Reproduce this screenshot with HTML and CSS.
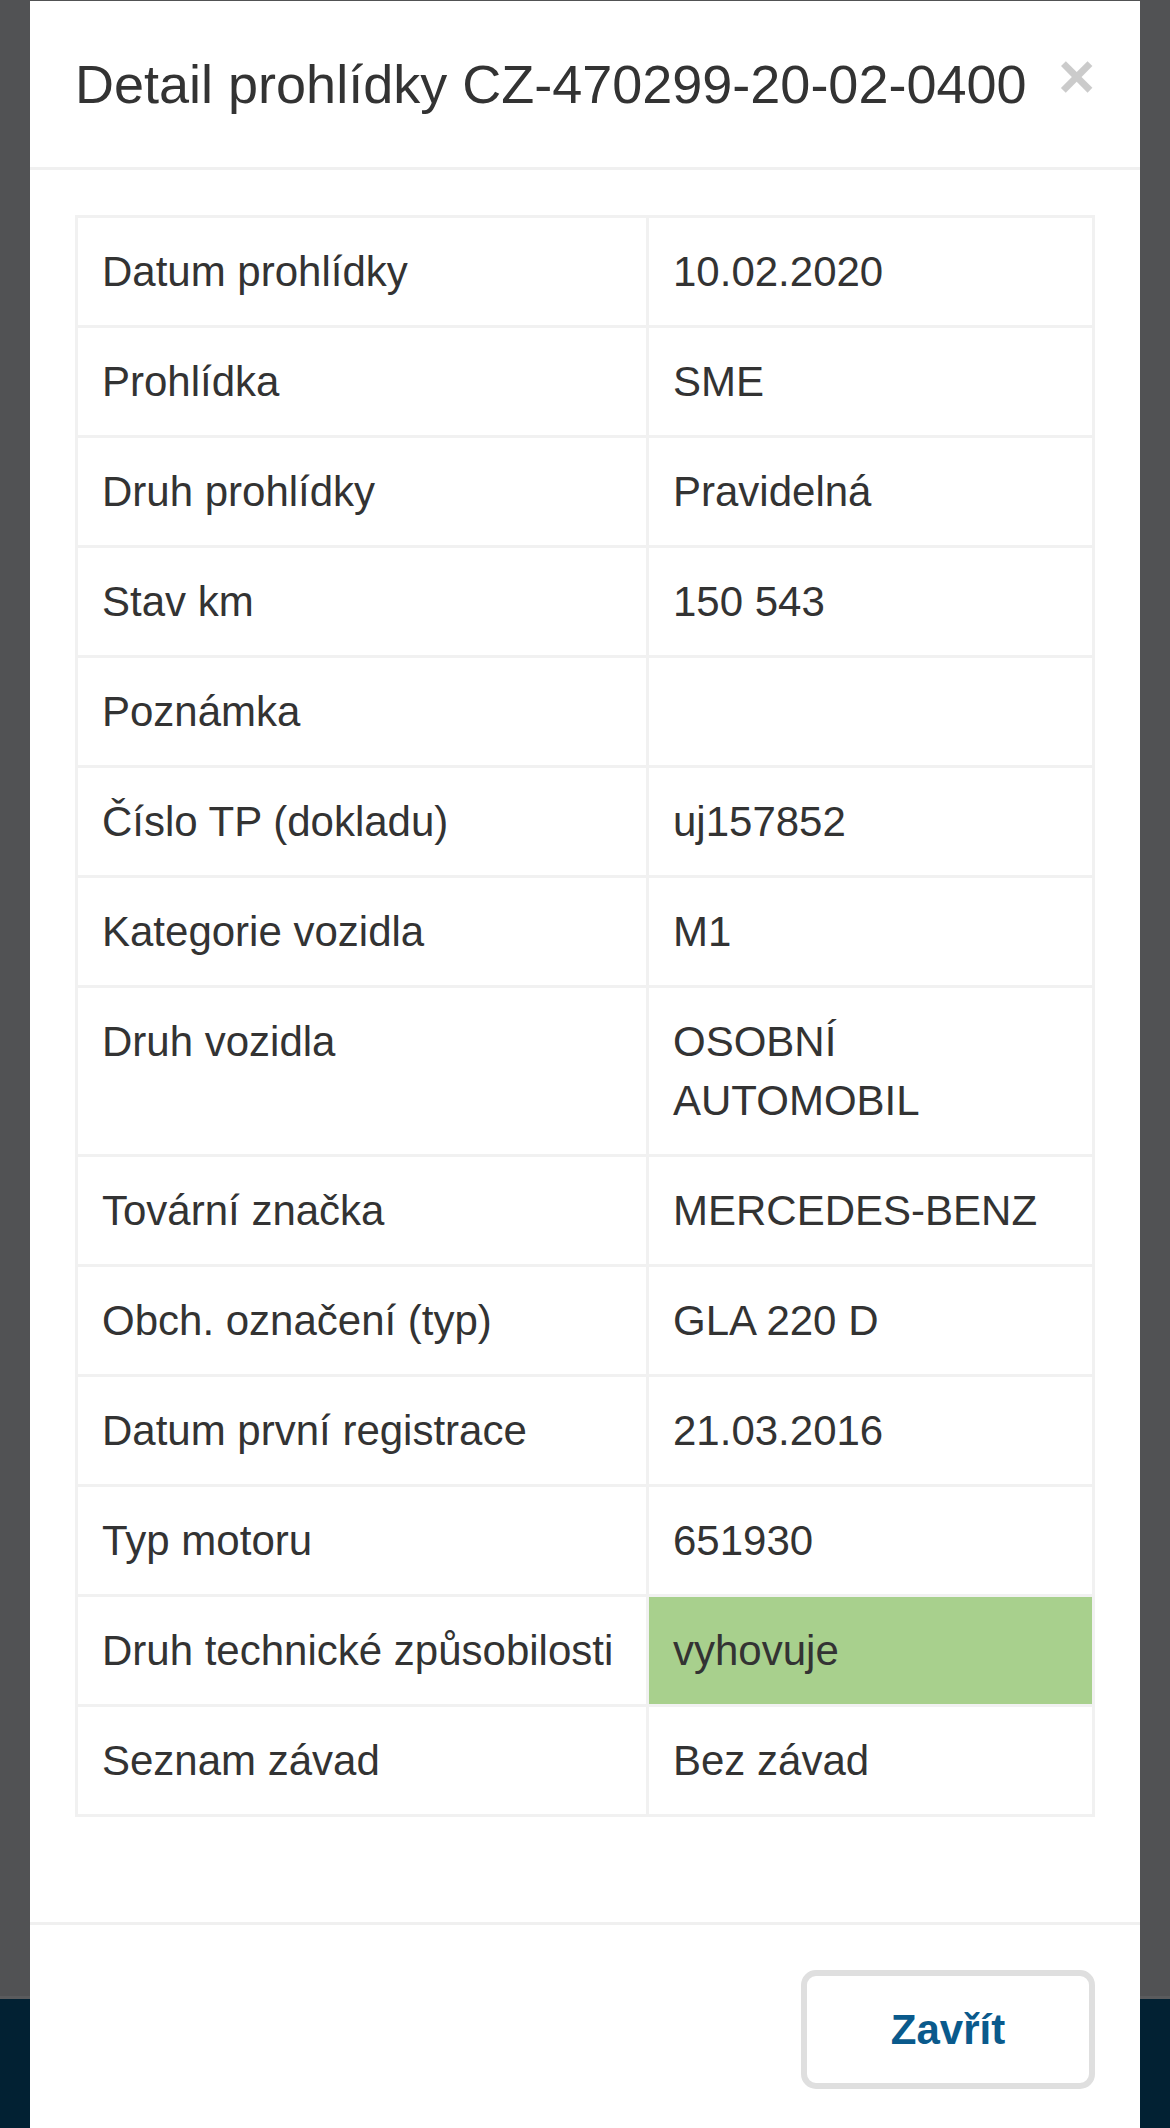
FILE: index.html
```html
<!DOCTYPE html>
<html lang="cs">
<head>
    <meta charset="UTF-8">
    <meta name="viewport" content="width=device-width, initial-scale=1.0">
    <title>Detail prohlídky</title>
    <link rel="stylesheet" href="styles.css">
</head>
<body>
    <!-- page behind the backdrop -->
    <div class="page">
        <div class="page-main"></div>
        <div class="page-footer"></div>
    </div>

    <div class="modal">
        <div class="modal-header">
            <h4 class="modal-title">Detail prohlídky CZ-470299-20-02-0400</h4>
            <button type="button" class="close">&times;</button>
        </div>
        <div class="modal-body">
            <table class="detail-table">
                <tr><td class="label">Datum prohlídky</td><td>10.02.2020</td></tr>
                <tr><td class="label">Prohlídka</td><td>SME</td></tr>
                <tr><td class="label">Druh prohlídky</td><td>Pravidelná</td></tr>
                <tr><td class="label">Stav km</td><td>150 543</td></tr>
                <tr><td class="label">Poznámka</td><td></td></tr>
                <tr><td class="label">Číslo TP (dokladu)</td><td>uj157852</td></tr>
                <tr><td class="label">Kategorie vozidla</td><td>M1</td></tr>
                <tr><td class="label">Druh vozidla</td><td>OSOBNÍ AUTOMOBIL</td></tr>
                <tr><td class="label">Tovární značka</td><td>MERCEDES-BENZ</td></tr>
                <tr><td class="label">Obch. označení (typ)</td><td>GLA 220 D</td></tr>
                <tr><td class="label">Datum první registrace</td><td>21.03.2016</td></tr>
                <tr><td class="label">Typ motoru</td><td>651930</td></tr>
                <tr><td class="label">Druh technické způsobilosti</td><td class="success">vyhovuje</td></tr>
                <tr><td class="label">Seznam závad</td><td>Bez závad</td></tr>
            </table>
        </div>
        <div class="modal-footer">
            <button type="button" class="close-button">Zavřít</button>
        </div>
    </div>
</body>
</html>
```

FILE: styles.css
```css
body {
    font-family: "Liberation Sans", Arial, sans-serif;
    font-size: 42px;
    color: #333;
    margin: 0;
    padding: 0;
    overflow: hidden;
}

.page {
    height: 2128px;
    display: flex;
    flex-direction: column;
}
.page-main {
    flex: 1;
    background-color: #515254;
}
.page-footer {
    height: 129px;
    background-color: #022133;
    border-top: 3px solid #5a5b5d;
}

.modal {
    position: absolute;
    top: 1px;
    left: 30px;
    right: 30px;
    background-color: #fff;
}

.modal-header {
    display: flex;
    justify-content: space-between;
    align-items: flex-start;
    padding: 45px;
    border-bottom: 3px solid #f0f0f0;
}
.modal-title {
    margin: 0;
    font-size: 54px;
    font-weight: normal;
    line-height: 76px;
}
.close {
    margin-top: -1px;
    padding: 0;
    border: none;
    background: none;
    font-family: "Liberation Sans", Arial, sans-serif;
    font-size: 63px;
    font-weight: bold;
    line-height: 1;
    color: #000;
    opacity: 0.2;
}

.modal-body {
    padding: 45px;
}
.detail-table {
    width: 100%;
    border-collapse: collapse;
    margin-bottom: 60px;
}
.detail-table td {
    padding: 24px;
    line-height: 59px;
    vertical-align: top;
    border: 3px solid #f1f1f1;
}
.detail-table td.label {
    width: 520px;
}
.detail-table td.success {
    background-color: #a8d08d;
}

.modal-footer {
    padding: 45px;
    border-top: 3px solid #f0f0f0;
    text-align: right;
}
.close-button {
    width: 294px;
    height: 119px;
    box-sizing: border-box;
    border: 6px solid #dfdfdf;
    border-radius: 15px;
    background-color: #fff;
    font-family: "Liberation Sans", Arial, sans-serif;
    font-size: 42px;
    font-weight: bold;
    color: #0a5a8c;
    cursor: pointer;
}
```
